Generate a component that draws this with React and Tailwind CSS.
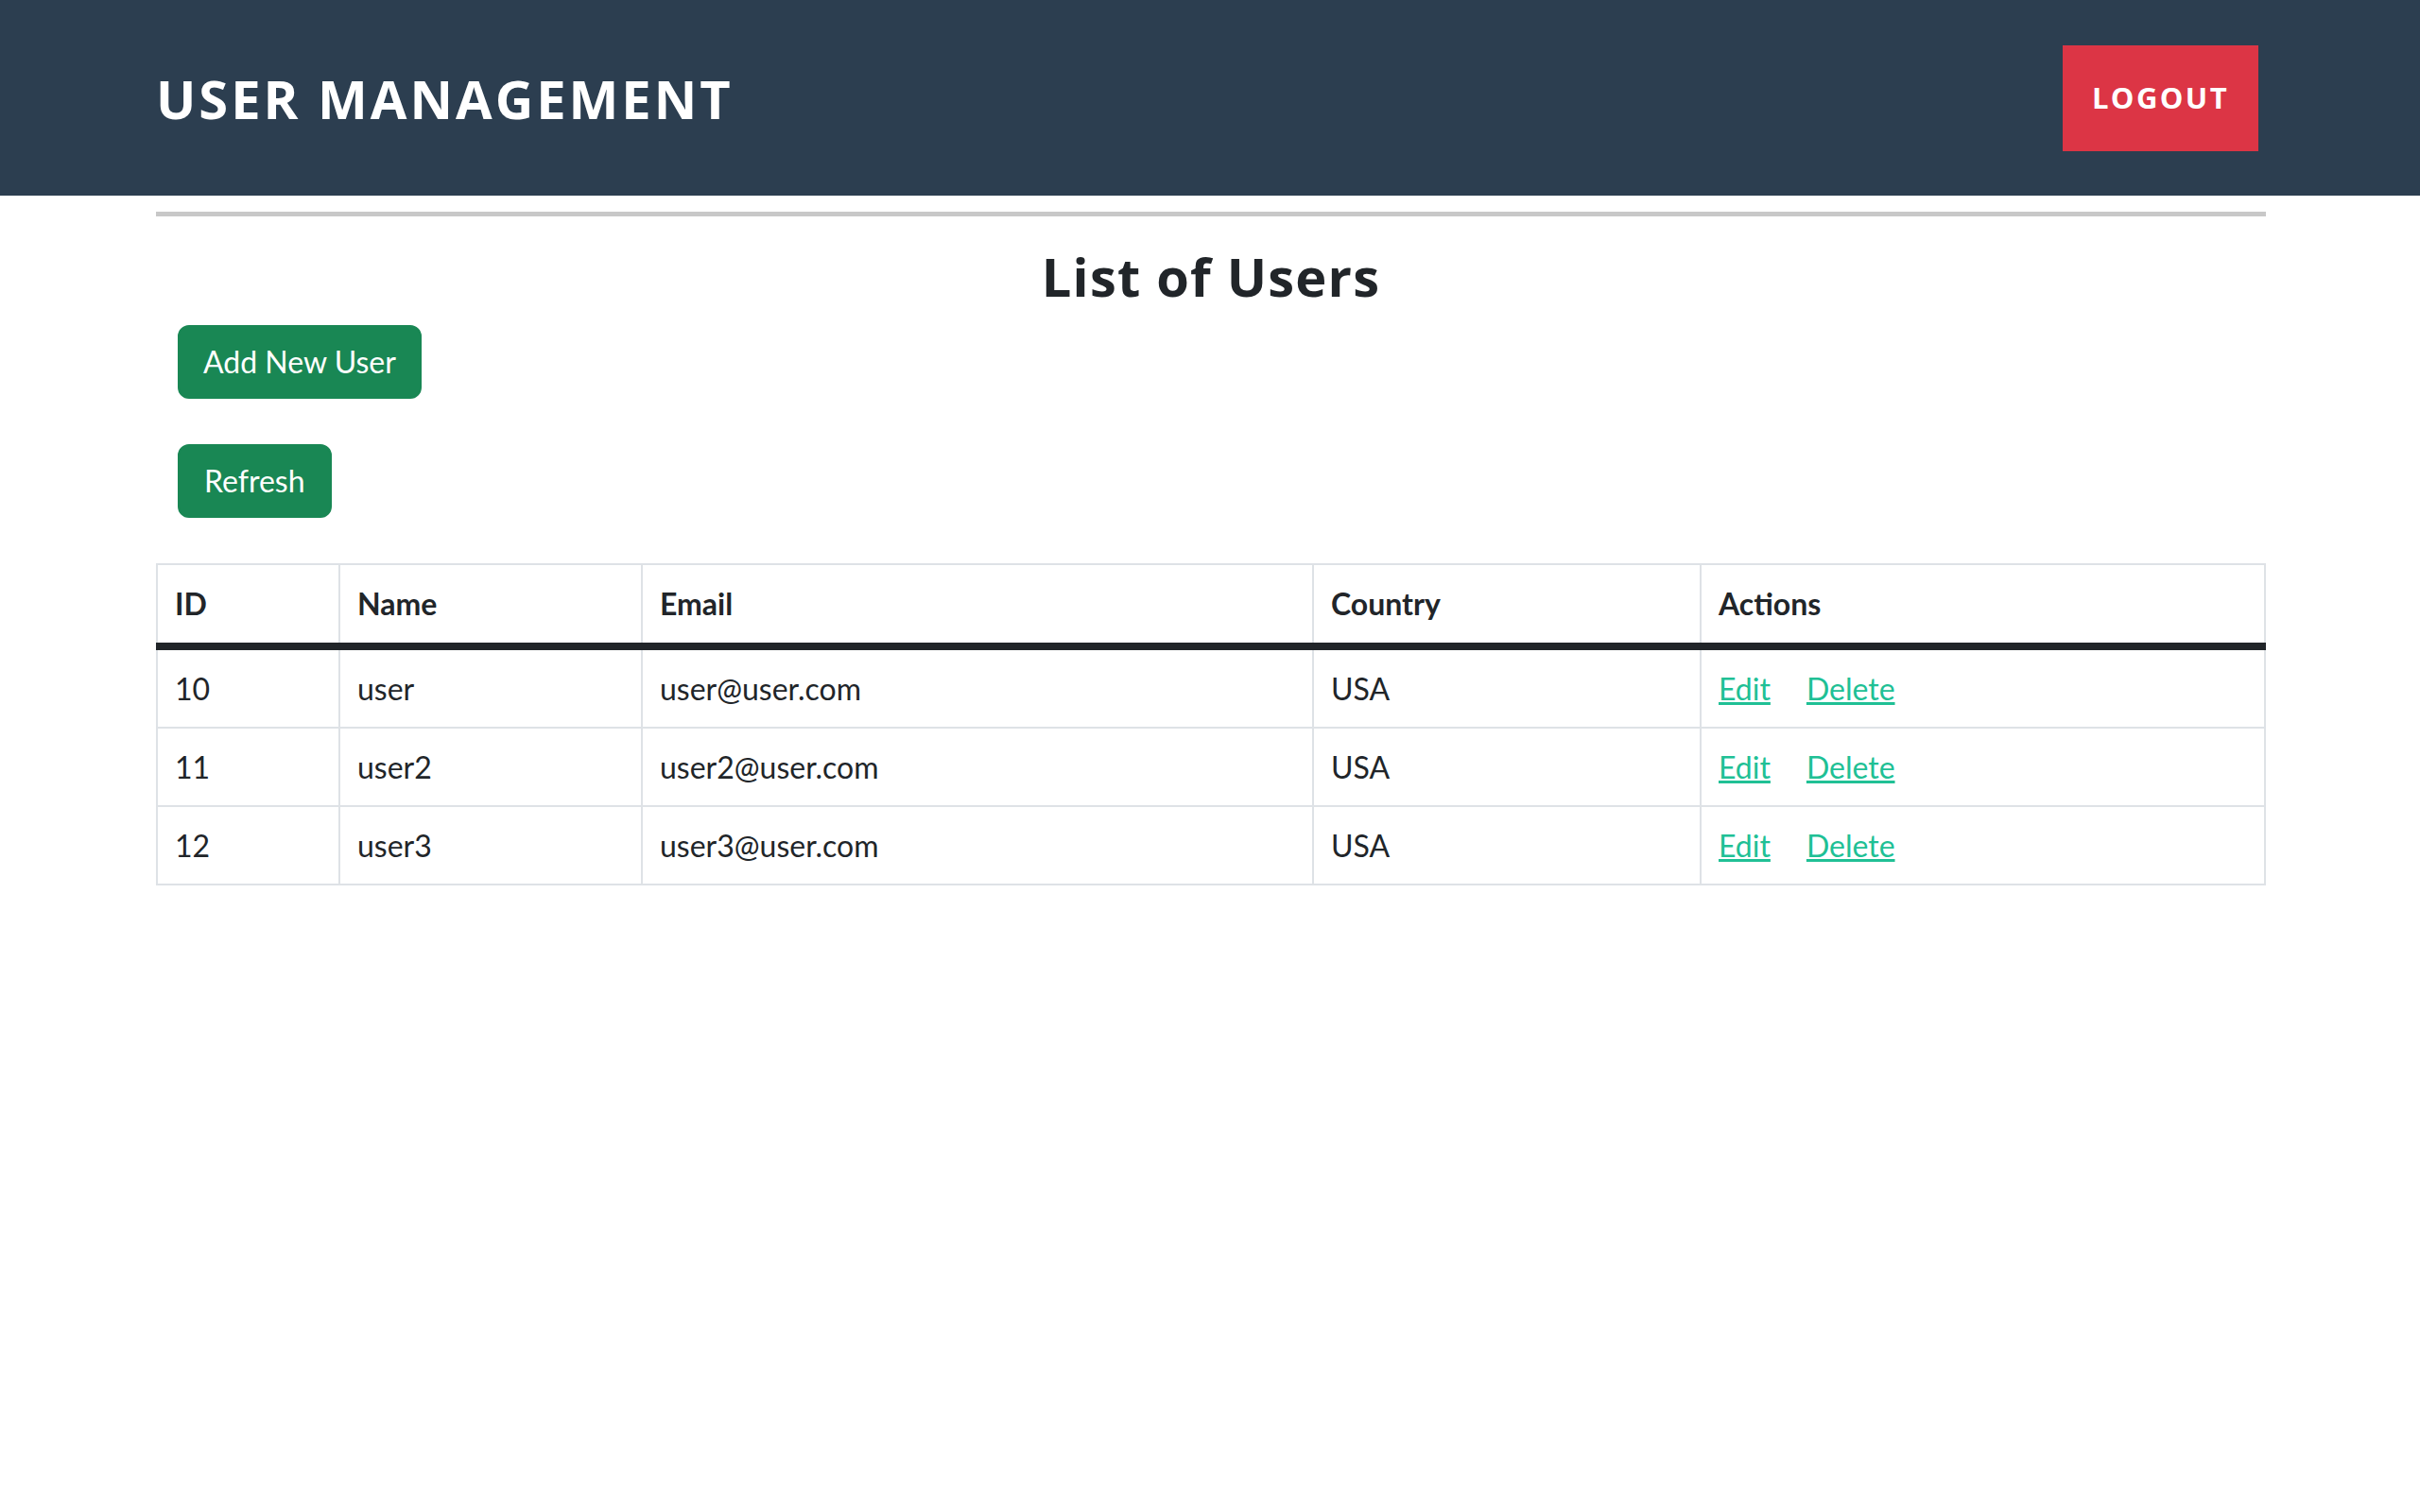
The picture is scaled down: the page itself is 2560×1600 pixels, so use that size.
const users = [
  { id: 10, name: "user", email: "user@user.com", country: "USA" },
  { id: 11, name: "user2", email: "user2@user.com", country: "USA" },
  { id: 12, name: "user3", email: "user3@user.com", country: "USA" },
]

const App = () => {
  return (
    <div className="min-h-screen bg-white font-['Lato',sans-serif] text-[#212529]">
      {/* Header */}
      <header className="h-[207px] bg-[#2c3e50] flex items-center justify-between pl-[165px] pr-[171px]">
        <h1 className="text-white text-[56px] font-bold leading-none tracking-[3px] font-['Open_Sans',sans-serif]">
          USER MANAGEMENT
        </h1>
        <button className="w-[207px] h-[112px] bg-[#dc3545] text-white text-[31px] font-bold tracking-[2.4px] font-['Open_Sans',sans-serif]">
          LOGOUT
        </button>
      </header>

      <div className="ml-[165px] w-[2232px]">
        <div className="mt-[17px] h-[5px] bg-[#c8c8c8]" />

        <h2 className="mt-[30px] text-center text-[56px] leading-[1.2] font-bold tracking-[1.2px] font-['Open_Sans',sans-serif]">
          List of Users
        </h2>

        <div className="px-[23px] mt-[18px] flex flex-col items-start gap-[48px]">
          <button className="bg-[#198754] border-2 border-[#198754] text-white text-[32px] leading-[48px] py-[13px] px-[25px] rounded-[12px]">
            Add New User
          </button>
          <button className="bg-[#198754] border-2 border-[#198754] text-white text-[32px] leading-[48px] py-[13px] px-[26px] rounded-[12px]">
            Refresh
          </button>
        </div>

        {/* Users table */}
        <table className="mt-[48px] w-full table-fixed border-collapse border-2 border-[#dee2e6] text-[32px] leading-[48px]">
          <thead>
            <tr>
              <th className="w-[193px] border-2 border-[#dee2e6] border-b-[#212529] border-b-[8px] px-[18px] py-[17px] text-left font-bold">ID</th>
              <th className="w-[320px] border-2 border-[#dee2e6] border-b-[#212529] border-b-[8px] px-[18px] py-[17px] text-left font-bold">Name</th>
              <th className="w-[710px] border-2 border-[#dee2e6] border-b-[#212529] border-b-[8px] px-[18px] py-[17px] text-left font-bold">Email</th>
              <th className="w-[410px] border-2 border-[#dee2e6] border-b-[#212529] border-b-[8px] px-[18px] py-[17px] text-left font-bold">Country</th>
              <th className="border-2 border-[#dee2e6] border-b-[#212529] border-b-[8px] px-[18px] py-[17px] text-left font-bold">Actions</th>
            </tr>
          </thead>
          <tbody>
            {users.map((u) => (
              <tr key={u.id}>
                <td className="border-2 border-[#dee2e6] px-[18px] pt-[17px] pb-[16px]">{u.id}</td>
                <td className="border-2 border-[#dee2e6] px-[18px] pt-[17px] pb-[16px]">{u.name}</td>
                <td className="border-2 border-[#dee2e6] px-[18px] pt-[17px] pb-[16px]">{u.email}</td>
                <td className="border-2 border-[#dee2e6] px-[18px] pt-[17px] pb-[16px]">{u.country}</td>
                <td className="border-2 border-[#dee2e6] px-[18px] pt-[17px] pb-[16px]">
                  <a href="#" className="text-[#20c095] underline mr-[38px]">Edit</a>
                  <a href="#" className="text-[#20c095] underline">Delete</a>
                </td>
              </tr>
            ))}
          </tbody>
        </table>
      </div>
    </div>
  )
}

export default App
